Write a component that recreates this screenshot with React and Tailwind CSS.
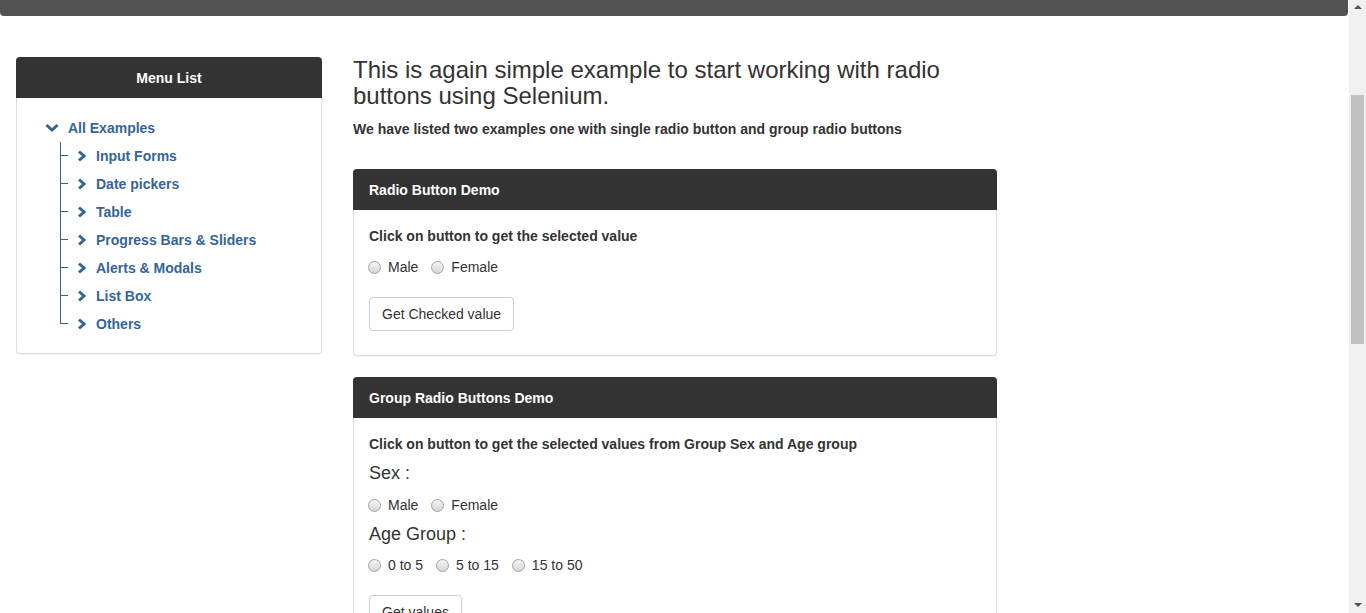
const menu = [
  "Input Forms",
  "Date pickers",
  "Table",
  "Progress Bars & Sliders",
  "Alerts & Modals",
  "List Box",
  "Others",
];

function ChevronRight() {
  return (
    <svg width="10" height="12" viewBox="0 0 10 12" className="shrink-0">
      <path d="M2 1.5 L7 6 L2 10.5" fill="none" stroke="#33659a" strokeWidth="3" />
    </svg>
  );
}

function ChevronDown() {
  return (
    <svg width="14" height="10" viewBox="0 0 14 10" className="shrink-0">
      <path d="M1.5 2 L7 7 L12.5 2" fill="none" stroke="#33659a" strokeWidth="3" />
    </svg>
  );
}

function Radio({ label }) {
  return (
    <label className="flex items-center">
      <span className="-ml-px mr-[7px] inline-block h-[13px] w-[13px] rounded-full border border-[#a3a3a3] bg-linear-to-b from-[#f5f5f5] to-[#d6d6d6]" />
      <span>{label}</span>
    </label>
  );
}

function Panel({ title, children }) {
  return (
    <div className="rounded-[4px] shadow-[0_1px_1px_rgba(0,0,0,0.06)]">
      <div className="flex h-[41px] items-center rounded-t-[4px] bg-[#333] px-[16px] pt-[2px] text-[14px] font-bold text-white">
        {title}
      </div>
      <div className="rounded-b-[4px] border-x border-b border-[#ddd] bg-white px-[15px] pb-[24px] pt-[16px]">
        {children}
      </div>
    </div>
  );
}

function Button({ children }) {
  return (
    <button className="h-[34px] rounded-[4px] border border-[#ccc] bg-white px-[12px] text-[14px] text-[#333]">
      {children}
    </button>
  );
}

export default function App() {
  return (
    <div className="flex h-[613px] overflow-hidden bg-white font-['Liberation_Sans',Arial,sans-serif] text-[#333]">
      <div className="flex-1">
        <div className="h-[16px] w-[1348px] rounded-b-[4px] bg-[#525252]" />

        <div className="flex pt-[41px]">
          {/* sidebar */}
          <div className="ml-[16px] w-[306px] shrink-0 self-start rounded-[4px] shadow-[0_1px_1px_rgba(0,0,0,0.06)]">
            <div className="flex h-[41px] items-center justify-center rounded-t-[4px] bg-[#333] pt-[2px] text-[14px] font-bold text-white">
              Menu List
            </div>
            <div className="rounded-b-[4px] border-x border-b border-[#ddd] bg-white pb-[15px] pt-[16px] text-[14px] font-bold text-[#33659a]">
              <div className="flex h-[28px] items-center pl-[28px]">
                <ChevronDown />
                <span className="ml-[9px]">All Examples</span>
              </div>
              <ul className="pl-[43px]">
                {menu.map((item, i) => (
                  <li key={item} className="flex h-[28px] items-stretch">
                    <div className="flex w-[8px] shrink-0 flex-col">
                      <div className="h-[14px] border-b border-l border-[#33659a]" />
                      {i < menu.length - 1 && <div className="flex-1 border-l border-[#33659a]" />}
                    </div>
                    <div className="ml-[9px] flex items-center">
                      <ChevronRight />
                      <span className="ml-[9px]">{item}</span>
                    </div>
                  </li>
                ))}
              </ul>
            </div>
          </div>

          {/* main */}
          <div className="ml-[31px] w-[644px] shrink-0">
            <h3 className="text-[24px] leading-[26px]">
              This is again simple example to start working with radio buttons using Selenium.
            </h3>
            <p className="mt-[10px] text-[14px] font-bold leading-[20px]">
              We have listed two examples one with single radio button and group radio buttons
            </p>

            <div className="mt-[30px]">
              <Panel title="Radio Button Demo">
                <p className="text-[14px] font-bold leading-[20px]">Click on button to get the selected value</p>
                <div className="mt-[11px] flex gap-[14px] text-[14px] leading-[20px]">
                  <Radio label="Male" />
                  <Radio label="Female" />
                </div>
                <div className="mt-[20px]">
                  <Button>Get Checked value</Button>
                </div>
              </Panel>
            </div>

            <div className="mt-[21px]">
              <Panel title="Group Radio Buttons Demo">
                <p className="text-[14px] font-bold leading-[20px]">
                  Click on button to get the selected values from Group Sex and Age group
                </p>
                <div className="mt-[9px] text-[18px] leading-[20px]">Sex :</div>
                <div className="mt-[12px] flex gap-[14px] text-[14px] leading-[20px]">
                  <Radio label="Male" />
                  <Radio label="Female" />
                </div>
                <div className="mt-[9px] text-[18px] leading-[20px]">Age Group :</div>
                <div className="mt-[11px] flex gap-[14px] text-[14px] leading-[20px]">
                  <Radio label="0 to 5" />
                  <Radio label="5 to 15" />
                  <Radio label="15 to 50" />
                </div>
                <div className="mt-[20px]">
                  <Button>Get values</Button>
                </div>
              </Panel>
            </div>
          </div>
        </div>
      </div>

      {/* scrollbar */}
      <div className="flex w-[17px] shrink-0 flex-col items-center bg-[#f0f0f0]">
        <div className="mt-[5px] h-0 w-0 border-x-[4px] border-b-[4px] border-x-transparent border-b-[#505050]" />
        <div className="mt-[86px] h-[249px] w-[13px] bg-[#c1c1c1]" />
        <div className="flex-1" />
        <div className="mb-[6px] h-0 w-0 border-x-[4px] border-t-[4px] border-x-transparent border-t-[#505050]" />
      </div>
    </div>
  );
}
